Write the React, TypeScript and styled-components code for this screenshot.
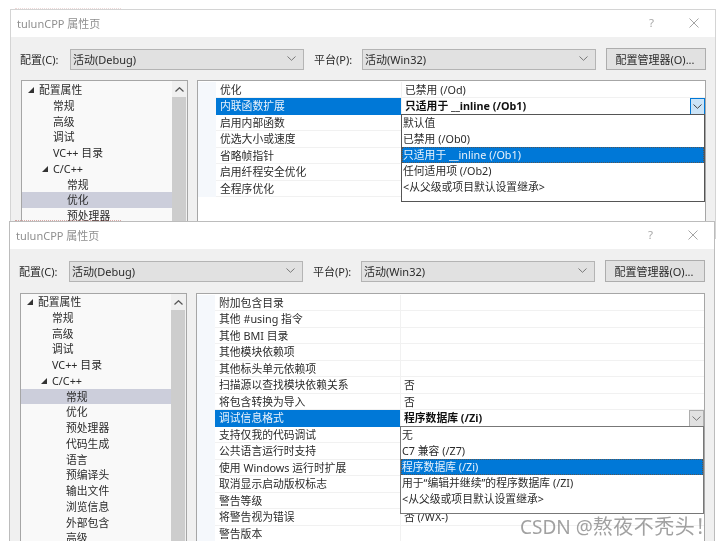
import React from 'react';
import styled, { createGlobalStyle } from 'styled-components';

const Global = createGlobalStyle`
  html, body { margin: 0; padding: 0; background: #fff; }
  body { font-family: "Noto Sans", "Noto Sans CJK SC", sans-serif; }
`;

const Desktop = styled.div`
  position: relative;
  width: 719px;
  height: 546px;
  overflow: hidden;
  background: #fff;
  filter: blur(0.4px);
`;

const Crumb = styled.div<{ $top: number; $opacity: number }>`
  position: absolute;
  top: ${p => p.$top}px;
  left: 15px;
  width: 106px;
  border-top: 1px dotted #b0483f;
  opacity: ${p => p.$opacity};
`;

const Window = styled.section<{ $left: number; $top: number; $height: number; $edge: string }>`
  position: absolute;
  left: ${p => p.$left}px;
  top: ${p => p.$top}px;
  width: 706px;
  height: ${p => p.$height}px;
  box-sizing: border-box;
  border: 1px solid ${p => p.$edge};
  border-bottom: 0;
  background: #f0f0f0;
  overflow: hidden;
  color: #2b2b2b;
  font-size: 10.8px;
`;

const TitleBar = styled.header`
  height: 27px;
  background: #fff;
  display: flex;
  align-items: center;
  padding: 0 16px 2px 6px;
  box-sizing: border-box;
  color: #8f8f8f;
  font-size: 11px;
`;

const TitleText = styled.span`
  flex: 1;
`;

const HelpMark = styled.span`
  width: 30px;
  color: #a8a8a8;
  font-size: 11.5px;
  margin-right: 10px;
`;

const Toolbar = styled.div`
  display: grid;
  grid-template-columns: 50px 234px 58px 234px 110px;
  align-items: center;
  height: 21px;
  margin: 11px 0 0 9px;
`;

const FieldLabel = styled.label<{ $offset: number }>`
  margin-left: ${p => p.$offset}px;
  padding-bottom: 1px;
  white-space: nowrap;
  font-size: 11px;
`;

const Select = styled.div`
  box-sizing: border-box;
  height: 21px;
  background: #e1e1e1;
  border: 1px solid #b4b4b4;
  display: flex;
  align-items: center;
  justify-content: space-between;
  padding: 0 7px 1px 2px;
  font-size: 11px;
`;

const ManagerButton = styled.button`
  box-sizing: border-box;
  height: 22px;
  margin-left: 10px;
  width: 100px;
  padding: 0 2px 1px 0;
  background: #e1e1e1;
  border: 1px solid #adadad;
  color: #2b2b2b;
  font: inherit;
  font-size: 11px;
`;

const Body = styled.div<{ $gap: number }>`
  display: flex;
  gap: 9px;
  margin: ${p => p.$gap}px 0 0 10px;
`;

const Tree = styled.nav`
  box-sizing: border-box;
  width: 167px;
  height: 480px;
  flex: none;
  display: flex;
  border: 1px solid #a6a6a6;
  background: #f9f9f9;
`;

const TreeList = styled.ul<{ $pad: number }>`
  flex: 1;
  list-style: none;
  margin: 0;
  padding: ${p => p.$pad}px 0 0;
`;

const TreeRow = styled.li<{ $level: number; $selected?: boolean }>`
  position: relative;
  height: 15.76px;
  line-height: 15.76px;
  padding-left: ${p => 17 + p.$level * 14}px;
  background: ${p => (p.$selected ? '#cccedb' : 'transparent')};
  white-space: nowrap;
`;

const Caret = styled.svg<{ $level: number }>`
  position: absolute;
  left: ${p => 6 + p.$level * 14}px;
  top: 5px;
  width: 6px;
  height: 6px;
`;

const Scrollbar = styled.div`
  width: 15px;
  flex: none;
  background: #f0f0f0;
  display: flex;
  flex-direction: column;
`;

const ScrollUp = styled.div`
  height: 16px;
  display: flex;
  align-items: center;
  justify-content: center;
`;

const ScrollThumb = styled.div`
  flex: 1;
  width: 14px;
  background: #cdcdcd;
`;

const GridPanel = styled.div`
  position: relative;
  box-sizing: border-box;
  width: 509px;
  height: 480px;
  flex: none;
  border: 1px solid #a6a6a6;
  background: #fff;
  padding-top: 0.5px;
`;

const PropRow = styled.div`
  display: grid;
  grid-template-columns: 18px 185px 1fr;
  height: 16.5px;
  line-height: 15.5px;
`;

const Gutter = styled.div`
  background: #f5f8fc;
`;

const PropName = styled.div<{ $selected?: boolean }>`
  box-sizing: border-box;
  padding-left: 4px;
  white-space: nowrap;
  background: ${p => (p.$selected ? '#0078d7' : '#fff')};
  color: ${p => (p.$selected ? '#e8f2fb' : 'inherit')};
  border-bottom: 1px solid ${p => (p.$selected ? '#0078d7' : '#f1f1f1')};
`;

const PropValue = styled.div<{ $bold?: boolean }>`
  box-sizing: border-box;
  padding-left: 3px;
  white-space: nowrap;
  font-weight: ${p => (p.$bold ? 700 : 400)};
  color: ${p => (p.$bold ? '#111' : 'inherit')};
  border-left: 1px solid #f1f1f1;
  border-bottom: 1px solid #f1f1f1;
`;

const RowButton = styled.div<{ $active: boolean; $top: number }>`
  position: absolute;
  box-sizing: border-box;
  right: 0;
  top: ${p => p.$top}px;
  width: 15px;
  height: 16.5px;
  display: flex;
  align-items: center;
  justify-content: center;
  background: ${p => (p.$active ? '#cce4f7' : '#e1e1e1')};
  border: 1px solid ${p => (p.$active ? '#0078d7' : '#adadad')};
`;

const Dropdown = styled.ul<{ $top: number; $edge: string }>`
  position: absolute;
  left: 203px;
  right: 0;
  top: ${p => p.$top}px;
  height: 88px;
  box-sizing: border-box;
  margin: 0;
  padding: 0;
  list-style: none;
  background: #fff;
  border: 1px solid ${p => p.$edge};
`;

const DropdownItem = styled.li<{ $selected?: boolean }>`
  box-sizing: border-box;
  height: 16px;
  line-height: 16px;
  padding-left: 1px;
  white-space: nowrap;
  background: ${p => (p.$selected ? '#0078d7' : 'transparent')};
  color: ${p => (p.$selected ? '#e8f2fb' : 'inherit')};
  outline: ${p => (p.$selected ? '1px dotted #555' : 'none')};
  outline-offset: -1px;
`;

const Watermark = styled.div`
  position: absolute;
  left: 520px;
  top: 514px;
  font-size: 19px;
  line-height: 26px;
  white-space: nowrap;
  color: rgba(125, 125, 125, 0.72);
`;

const WatermarkName = styled.span`
  font-size: 20px;
  letter-spacing: 0.5px;
`;

const Chevron = ({ color = '#777' }: { color?: string }) => (
  <svg width="9" height="5" viewBox="0 0 9 5" fill="none">
    <path d="M0.5 0.5 L4.5 4.3 L8.5 0.5" stroke={color} strokeWidth="1" />
  </svg>
);

const CloseGlyph = styled.svg`
  width: 10px;
  height: 10px;
`;

type TreeItem = { label: string; level: number; open?: boolean; selected?: boolean };
type Prop = { name: string; value?: string; bold?: boolean; selected?: boolean };

type DialogProps = {
  left: number;
  top: number;
  height: number;
  edge: string;
  bodyGap: number;
  treePad: number;
  tree: TreeItem[];
  props: Prop[];
  options: { label: string; selected?: boolean }[];
  dropTop: number;
  dropEdge: string;
  buttonTop: number;
  activeButton: boolean;
};

const Dialog = (d: DialogProps) => (
  <Window $left={d.left} $top={d.top} $height={d.height} $edge={d.edge}>
    <TitleBar>
      <TitleText>tulunCPP 属性页</TitleText>
      <HelpMark>?</HelpMark>
      <CloseGlyph viewBox="0 0 10 10" fill="none">
        <path d="M0.5 0.5 L9.5 9.5 M9.5 0.5 L0.5 9.5" stroke="#9a9a9a" strokeWidth="0.9" />
      </CloseGlyph>
    </TitleBar>
    <Toolbar>
      <FieldLabel $offset={0}>配置(C):</FieldLabel>
      <Select>
        活动(Debug)
        <Chevron />
      </Select>
      <FieldLabel $offset={10}>平台(P):</FieldLabel>
      <Select>
        活动(Win32)
        <Chevron />
      </Select>
      <ManagerButton>配置管理器(O)...</ManagerButton>
    </Toolbar>
    <Body $gap={d.bodyGap}>
      <Tree>
        <TreeList $pad={d.treePad}>
          {d.tree.map((t, i) => (
            <TreeRow key={i} $level={t.level} $selected={t.selected}>
              {t.open && (
                <Caret $level={t.level} viewBox="0 0 6 6">
                  <path d="M6 0 L6 6 L0 6 Z" fill="#333" />
                </Caret>
              )}
              {t.label}
            </TreeRow>
          ))}
        </TreeList>
        <Scrollbar>
          <ScrollUp>
            <svg width="9" height="5" viewBox="0 0 9 5" fill="none">
              <path d="M0.5 4.5 L4.5 0.7 L8.5 4.5" stroke="#555" strokeWidth="1.2" />
            </svg>
          </ScrollUp>
          <ScrollThumb />
        </Scrollbar>
      </Tree>
      <GridPanel>
        {d.props.map((p, i) => (
          <PropRow key={i}>
            <Gutter />
            <PropName $selected={p.selected}>{p.name}</PropName>
            <PropValue $bold={p.bold}>{p.value}</PropValue>
          </PropRow>
        ))}
        <RowButton $active={d.activeButton} $top={d.buttonTop}>
          <Chevron color={d.activeButton ? '#444' : '#777'} />
        </RowButton>
        <Dropdown $top={d.dropTop} $edge={d.dropEdge}>
          {d.options.map((o, i) => (
            <DropdownItem key={i} $selected={o.selected}>
              {o.label}
            </DropdownItem>
          ))}
        </Dropdown>
      </GridPanel>
    </Body>
  </Window>
);

const topTree: TreeItem[] = [
  { label: '配置属性', level: 0, open: true },
  { label: '常规', level: 1 },
  { label: '高级', level: 1 },
  { label: '调试', level: 1 },
  { label: 'VC++ 目录', level: 1 },
  { label: 'C/C++', level: 1, open: true },
  { label: '常规', level: 2 },
  { label: '优化', level: 2, selected: true },
  { label: '预处理器', level: 2 },
];

const bottomTree: TreeItem[] = [
  { label: '配置属性', level: 0, open: true },
  { label: '常规', level: 1 },
  { label: '高级', level: 1 },
  { label: '调试', level: 1 },
  { label: 'VC++ 目录', level: 1 },
  { label: 'C/C++', level: 1, open: true },
  { label: '常规', level: 2, selected: true },
  { label: '优化', level: 2 },
  { label: '预处理器', level: 2 },
  { label: '代码生成', level: 2 },
  { label: '语言', level: 2 },
  { label: '预编译头', level: 2 },
  { label: '输出文件', level: 2 },
  { label: '浏览信息', level: 2 },
  { label: '外部包含', level: 2 },
  { label: '高级', level: 2 },
];

const topProps: Prop[] = [
  { name: '优化', value: '已禁用 (/Od)' },
  { name: '内联函数扩展', value: '只适用于 __inline (/Ob1)', bold: true, selected: true },
  { name: '启用内部函数' },
  { name: '优选大小或速度' },
  { name: '省略帧指针' },
  { name: '启用纤程安全优化' },
  { name: '全程序优化' },
];

const bottomProps: Prop[] = [
  { name: '附加包含目录' },
  { name: '其他 #using 指令' },
  { name: '其他 BMI 目录' },
  { name: '其他模块依赖项' },
  { name: '其他标头单元依赖项' },
  { name: '扫描源以查找模块依赖关系', value: '否' },
  { name: '将包含转换为导入', value: '否' },
  { name: '调试信息格式', value: '程序数据库 (/Zi)', bold: true, selected: true },
  { name: '支持仅我的代码调试' },
  { name: '公共语言运行时支持' },
  { name: '使用 Windows 运行时扩展' },
  { name: '取消显示启动版权标志' },
  { name: '警告等级' },
  { name: '将警告视为错误', value: '否 (/WX-)' },
  { name: '警告版本' },
];

export default function App() {
  return (
    <Desktop>
      <Global />
      <Crumb $top={8} $opacity={0.2} />
      <Dialog
        left={10}
        top={9}
        height={230}
        edge="#d4d4d4"
        bodyGap={11}
        treePad={1}
        tree={topTree}
        props={topProps}
        options={[
          { label: '默认值' },
          { label: '已禁用 (/Ob0)' },
          { label: '只适用于 __inline (/Ob1)', selected: true },
          { label: '任何适用项 (/Ob2)' },
          { label: '<从父级或项目默认设置继承>' },
        ]}
        dropTop={33}
        dropEdge="#555"
        buttonTop={17}
        activeButton
      />
      <Crumb $top={220} $opacity={0.45} />
      <Dialog
        left={9}
        top={221}
        height={320}
        edge="#bcbcbc"
        bodyGap={12}
        treePad={0}
        tree={bottomTree}
        props={bottomProps}
        options={[
          { label: '无' },
          { label: 'C7 兼容 (/Z7)' },
          { label: '程序数据库 (/Zi)', selected: true },
          { label: '用于“编辑并继续”的程序数据库 (/ZI)' },
          { label: '<从父级或项目默认设置继承>' },
        ]}
        dropTop={132}
        dropEdge="#777"
        buttonTop={116}
        activeButton={false}
      />
      <Watermark>
        CSDN @<WatermarkName>熬夜不秃头！</WatermarkName>
      </Watermark>
    </Desktop>
  );
}
